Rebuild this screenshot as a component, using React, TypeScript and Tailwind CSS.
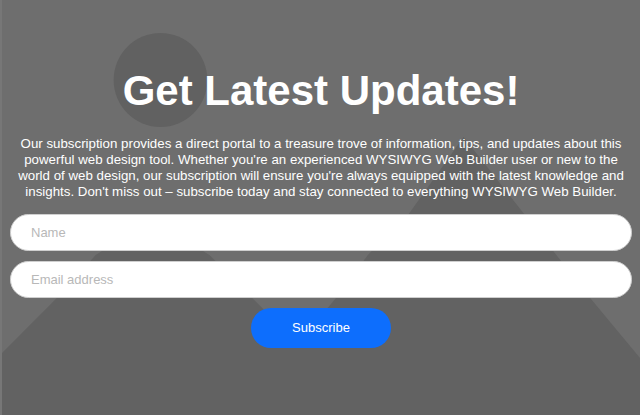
import React from "react";

function Backdrop() {
  return (
    <svg className="pointer-events-none absolute inset-0 h-full w-full" viewBox="0 0 640 415" preserveAspectRatio="none">
      <circle cx="159" cy="80" r="47" fill="#616161" />
      <polygon
        fill="#626262"
        points="0,353 55,298 94,255 150,219 208,255 251,298 297,344 335,298 367,255 408,214 463,137 590,298 640,358 640,415 0,415"
      />
    </svg>
  );
}

export default function App() {
  const campo =
    "h-[37px] w-full rounded-full border border-[#cfcfcf] bg-white px-5 text-[13px] text-gray-700 outline-none placeholder:text-[#b8b8b8]";

  return (
    <div
      className="relative h-[415px] w-full overflow-hidden border-l-2 border-[#777777] bg-[#6e6e6e]"
      style={{ fontFamily: '"Liberation Sans", Arial, sans-serif' }}
    >
      <Backdrop />
      <div className="relative flex flex-col items-center px-2 pt-[67px]">
        <h1 className="text-[42px] font-bold leading-[48px] text-white">Get Latest Updates!</h1>
        <p className="mt-[21px] w-[612px] text-center text-[13.3px] leading-[16px] text-white">
          Our subscription provides a direct portal to a treasure trove of information, tips, and updates about this
          powerful web design tool. Whether you're an experienced WYSIWYG Web Builder user or new to the world of web
          design, our subscription will ensure you're always equipped with the latest knowledge and insights. Don't
          miss out – subscribe today and stay connected to everything WYSIWYG Web Builder.
        </p>
        <form className="mt-[14px] flex w-full flex-col items-center gap-[10px]" onSubmit={(e) => e.preventDefault()}>
          <input type="text" placeholder="Name" className={campo} />
          <input type="email" placeholder="Email address" className={campo} />
          <button
            type="submit"
            className="h-10 w-[140px] rounded-full bg-[#0d6efd] text-[13px] text-white hover:bg-[#0b5ed7]"
          >
            Subscribe
          </button>
        </form>
      </div>
    </div>
  );
}
